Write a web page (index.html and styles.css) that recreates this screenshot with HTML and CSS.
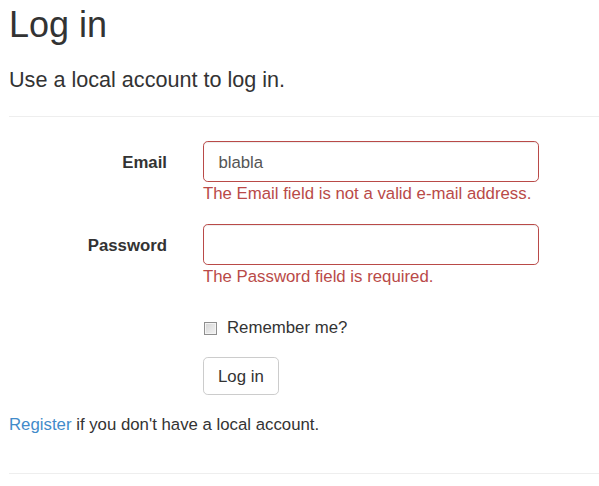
FILE: index.html
```html
<!DOCTYPE html>
<html lang="en">
<head>
<meta charset="utf-8">
<title>Log in</title>
<link rel="stylesheet" href="styles.css">
</head>
<body>
<div class="page">
  <h2 class="title">Log in</h2>
  <section class="login">
    <form class="form" action="#" onsubmit="return false;">
      <h4 class="subtitle">Use a local account to log in.</h4>
      <hr class="rule">
      <div class="form-group">
        <label class="control-label" for="email">Email</label>
        <div class="field">
          <input class="form-control is-invalid" id="email" type="text" value="blabla">
          <span class="field-error">The Email field is not a valid e-mail address.</span>
        </div>
      </div>
      <div class="form-group">
        <label class="control-label" for="password">Password</label>
        <div class="field">
          <input class="form-control is-invalid" id="password" type="password" value="">
          <span class="field-error">The Password field is required.</span>
        </div>
      </div>
      <div class="form-group offset">
        <div class="checkbox">
          <label class="check-label"><input class="check" type="checkbox">Remember me?</label>
        </div>
      </div>
      <div class="form-group offset">
        <button class="btn" type="submit">Log in</button>
      </div>
    </form>
    <p class="register"><a class="link" href="#">Register</a> if you don't have a local account.</p>
  </section>
  <hr class="rule">
</div>
</body>
</html>
```

FILE: styles.css
```css
* {
  box-sizing: border-box;
}

html, body {
  margin: 0;
  padding: 0;
  background: #fff;
}

body {
  font-family: "Liberation Sans", Arial, Helvetica, sans-serif;
  font-size: 16.8px;
  line-height: 24px;
  color: #333;
  overflow: hidden;
}

.page {
  padding-left: 9px;
}

.login {
  display: flow-root;
}

.title {
  margin: 4.7px 0 0;
  font-size: 36px;
  line-height: 39.6px;
  font-weight: normal;
}

.subtitle {
  margin: 24px 0 12px;
  font-size: 21.6px;
  line-height: 23.76px;
  font-weight: normal;
}

.form {
  margin: 0;
}

.rule {
  margin: 24px 0;
  border: 0;
  border-top: 1px solid #eee;
  height: 0;
}

.form-group {
  display: grid;
  grid-template-columns: 158px 336px;
  column-gap: 36px;
  margin-bottom: 18px;
}

.form-group.offset {
  display: block;
  padding-left: 194px;
}

.control-label {
  text-align: right;
  font-weight: bold;
  padding-top: 9.8px;
}

.field {
  display: flex;
  flex-direction: column;
}

.form-control {
  display: block;
  width: 336px;
  height: 40.8px;
  padding: 8.6px 14.4px 5.8px;
  font-family: inherit;
  font-size: 16.8px;
  line-height: 24px;
  color: #555;
  background: #fff;
  border: 1px solid #ccc;
  border-radius: 4.8px;
  box-shadow: inset 0 1px 1px rgba(0, 0, 0, 0.075);
  outline: none;
}

.form-control.is-invalid {
  border-color: #b94a48;
}

.field-error {
  display: block;
  color: #b94a48;
  line-height: 24px;
}

.checkbox {
  height: 32.4px;
  padding-top: 8.4px;
}

.check-label {
  position: relative;
  display: block;
  height: 24px;
  padding-left: 24px;
  padding-top: 0.8px;
  line-height: 24px;
  font-weight: normal;
}

.check {
  position: absolute;
  left: 1px;
  top: 6.5px;
  width: 13px;
  height: 13px;
  margin: 0;
  -webkit-appearance: none;
  appearance: none;
  border: 1px solid #8f8f8f;
  background: linear-gradient(135deg, #d4d4d4 0%, #e6e6e6 55%, #f2f2f2 100%);
  box-shadow: inset 0 0 0 1px #f4f4f4;
}

.btn {
  display: inline-block;
  height: 37.5px;
  padding: 2px 14px 0;
  font-family: inherit;
  font-size: 16.8px;
  line-height: 24px;
  color: #333;
  background: #fff;
  border: 1px solid #ccc;
  border-radius: 4.8px;
  cursor: pointer;
}

.register {
  margin: 0 0 12px;
}

.link {
  color: #428bca;
  text-decoration: none;
}
```
